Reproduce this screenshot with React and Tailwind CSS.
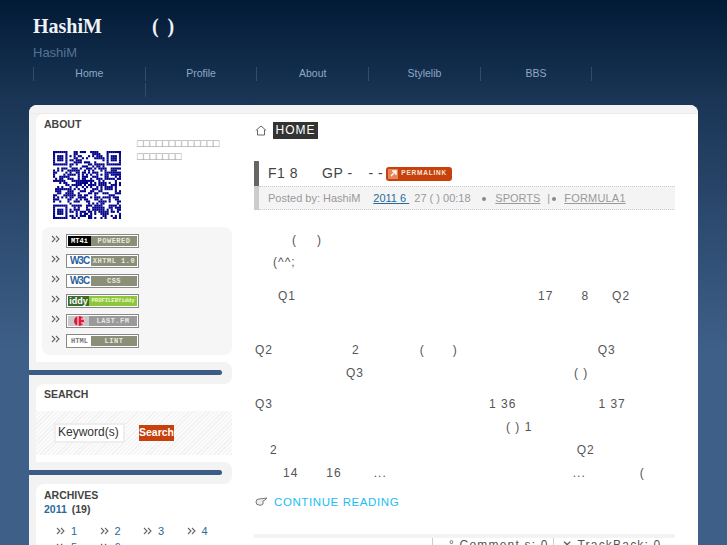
import React from "react";

function mulberry(a) {
  return () => {
    a |= 0; a = (a + 0x6d2b79f5) | 0;
    let t = Math.imul(a ^ (a >>> 15), 1 | a);
    t = (t + Math.imul(t ^ (t >>> 7), 61 | t)) ^ t;
    return ((t ^ (t >>> 14)) >>> 0) / 4294967296;
  };
}

function QR() {
  const n = 33;
  const r = mulberry(77);
  const rects = [];
  const inFinder = (x, y) => (x < 8 && y < 8) || (x >= n - 8 && y < 8) || (x < 8 && y >= n - 8);
  const finder = (fx, fy, x, y) => {
    const dx = x - fx, dy = y - fy;
    if (dx < 0 || dy < 0 || dx > 6 || dy > 6) return false;
    return dx === 0 || dy === 0 || dx === 6 || dy === 6 || (dx >= 2 && dx <= 4 && dy >= 2 && dy <= 4);
  };
  for (let y = 0; y < n; y++) {
    for (let x = 0; x < n; x++) {
      let on;
      if (inFinder(x, y)) on = finder(0, 0, x, y) || finder(n - 7, 0, x, y) || finder(0, n - 7, x, y);
      else on = r() > 0.47;
      if (on) rects.push(<rect key={x + "-" + y} x={x} y={y} width="1.02" height="1.02" />);
    }
  }
  return (
    <svg width="68" height="68" viewBox="0 0 33 33" fill="#000088" className="block">
      {rects}
    </svg>
  );
}

function Chevs({ className = "" }) {
  return (
    <svg width="9" height="8" viewBox="0 0 9 8" fill="none" stroke="#666" strokeWidth="1.1" className={className}>
      <path d="M1 1l3 3-3 3M5 1l3 3-3 3" />
    </svg>
  );
}

function Badge({ left, right, leftCls, rightCls, leftText = "text-white", w = "w-[23px]" }) {
  return (
    <div className="flex h-[14px] w-[73px] border border-[#888] bg-white p-px font-['Liberation_Mono',monospace] text-[7px] font-bold leading-[10px]">
      <div className={`${w} ${leftCls} ${leftText} flex items-center justify-center overflow-hidden whitespace-nowrap`}>{left}</div>
      <div className={`flex-1 ${rightCls} flex items-center justify-center whitespace-nowrap tracking-[0.5px] text-[#e8e8e0]`}>{right}</div>
    </div>
  );
}

function Row({ children }) {
  return (
    <div className="flex h-[20px] items-start gap-[6px]">
      <Chevs className="mt-[1px]" />
      {children}
    </div>
  );
}

function SideSep() {
  return (
    <div className="h-[22px] rounded-r-lg bg-[#f3f3f3] py-[8px]">
      <div className="h-[5px] w-[193px] rounded-r bg-[#3d5c85]" />
    </div>
  );
}

function Widget({ children, className = "" }) {
  return (
    <div className={`bg-[#f3f3f3] pl-[7px] ${className}`}>
      <div className="rounded-tl-lg bg-white">{children}</div>
    </div>
  );
}

const navItems = ["Home", "Profile", "About", "Stylelib", "BBS"];

export default function App() {
  return (
    <div className="h-[545px] w-[727px] overflow-hidden bg-[linear-gradient(#011a36_0,#1a3555_100px,#2c4a6f_220px,#3e5f88_350px)] font-['Liberation_Sans',sans-serif]">
      <header className="h-[105px] pl-[33px]">
        <div className="flex h-[38px] items-end font-['Liberation_Serif',serif] text-[20px] font-bold leading-[24px] text-[#eef1f5]">
          <span>HashiM</span>
          <span className="ml-[50px]">(</span>
          <span className="ml-[9px]">)</span>
        </div>
        <div className="mt-[7px] text-[13px] leading-[15px] text-[#557396]">HashiM</div>
        <nav className="mt-[7px] text-[10.5px] leading-[13px] text-[#8ea8c6]">
          <div className="flex">
            {navItems.map((t) => (
              <div key={t} className="h-[14px] w-[111.7px] border-l border-[#2f4c70] text-center">{t}</div>
            ))}
            <div className="h-[14px] border-l border-[#2f4c70]" />
          </div>
          <div className="ml-[111.7px] mt-[2px] h-[14px] border-l border-[#2f4c70]" />
        </nav>
      </header>

      <div className="ml-[29px] w-[669px] rounded-t-lg bg-white">
        <div className="h-[9px] rounded-t-lg border-b border-dotted border-[#e4e4e4] bg-[#f3f3f3]" />
        <div className="flex">
          <aside className="w-[203px] shrink-0">
            <Widget>
              <div className="h-[248px]">
                <h3 className="pl-[8px] pt-[3px] text-[10.5px] font-bold leading-[14px] text-[#444]">ABOUT</h3>
                <div className="flex h-[91px]">
                  <div className="ml-[17px] mt-[20px]"><QR /></div>
                  <p className="ml-[16px] mt-[6px] w-[86px] text-[10.5px] leading-[13px] text-[#999]">□□□□□□□□□□□□□ □□□□□□□</p>
                </div>
                <div className="ml-[6px] mt-[5px] h-[128px] rounded-lg bg-[#f6f6f6] pl-[9px] pt-[7px]">
                  <Row><Badge left="MT4i" right="POWERED" leftCls="bg-black" rightCls="bg-[#8b8f78]" /></Row>
                  <Row><Badge left={<span className="font-['Liberation_Sans',sans-serif] text-[10px] tracking-[-1px]">W3C</span>} right="XHTML 1.0" leftCls="bg-white" leftText="text-[#2a5f9e]" rightCls="bg-[#8b8f78]" /></Row>
                  <Row><Badge left={<span className="font-['Liberation_Sans',sans-serif] text-[10px] tracking-[-1px]">W3C</span>} right="CSS" leftCls="bg-white" leftText="text-[#2a5f9e]" rightCls="bg-[#8b8f78]" /></Row>
                  <Row><Badge left={<span className="font-['Liberation_Sans',sans-serif] text-[9px]">iddy</span>} right={<span className="text-[5.5px] tracking-[0px] text-[#f0f8d8]">PROFILEBYiddy</span>} w="w-[21px]" leftCls="bg-[#3c6b2c]" rightCls="bg-[#8cc63a]" /></Row>
                  <Row>
                    <Badge
                      left={
                        <svg width="18" height="10" viewBox="0 0 18 10">
                          <circle cx="9" cy="5" r="5" fill="#e0183c" />
                          <path d="M8 0v10" stroke="#fff" />
                          <path d="M11 3h3M11 7h3" stroke="#fff" />
                        </svg>
                      }
                      right="LAST.FM"
                      w="w-[21px]"
                      leftCls="bg-[#c9c9c9]"
                      rightCls="bg-[#9a9a9a]"
                    />
                  </Row>
                  <Row><Badge left="HTML" right="LINT" leftCls="bg-white" leftText="text-[#777]" rightCls="bg-[#8b8f78]" /></Row>
                </div>
              </div>
            </Widget>
            <SideSep />
            <Widget>
              <div className="h-[78px]">
                <h3 className="pl-[8px] pt-[3px] text-[10.5px] font-bold leading-[14px] text-[#444]">SEARCH</h3>
                <div className="mt-[10px] flex h-[44px] items-center bg-[repeating-linear-gradient(135deg,#f1f1f1_0,#f1f1f1_1px,#fbfbfb_1px,#fbfbfb_3px)] pl-[18px]">
                  <div className="h-[20px] w-[71px] border-2 border-[#eee] bg-white pl-[2px] text-[12px] leading-[15px] text-[#333]">Keyword(s)</div>
                  <div className="ml-[14px] h-[16px] w-[35px] bg-[#c8400b] text-center text-[10.5px] font-bold leading-[14px] text-white">Search</div>
                </div>
              </div>
            </Widget>
            <SideSep />
            <Widget>
              <div className="h-[70px] text-[#2a6a9a]">
                <h3 className="pl-[8px] pt-[4px] text-[10.5px] font-bold leading-[14px] text-[#444]">ARCHIVES</h3>
                <div className="pl-[8px] text-[10.5px] font-bold leading-[14px]">
                  2011 <span className="ml-[2px] text-[#444]">(19)</span>
                </div>
                <div className="ml-[20px] mt-[7px] grid w-[174px] grid-cols-4 text-[11px] leading-[16px]">
                  {["1", "2", "3", "4", "5", "6"].map((m) => (
                    <div key={m} className="flex items-center gap-[6px]">
                      <Chevs />
                      <span>{m}</span>
                    </div>
                  ))}
                </div>
              </div>
            </Widget>
          </aside>

          <main className="ml-[22px] w-[421px] shrink-0 text-[12px] tracking-[1px] text-[#555]">
            <div className="mt-[7px] flex h-[18px] items-center">
              <svg width="12" height="11" viewBox="0 0 12 11" fill="none" stroke="#666" strokeWidth="1" className="ml-[1px]">
                <path d="M.8 5.5L6 1l5.2 4.5M2.5 5v5h7V5" />
              </svg>
              <span className="ml-[6px] h-[17px] w-[45px] bg-[#333] text-center text-[12px] leading-[17px] tracking-[1px] text-white">HOME</span>
            </div>

            <div className="mt-[22px] flex h-[25px] items-center border-l-[5px] border-[#666] pl-[9px] text-[14px] tracking-[0.5px] text-[#444]">
              <span>F1 8</span>
              <span className="ml-[24px]">GP -</span>
              <span className="ml-[16px]">- -</span>
              <span className="ml-[3px] flex h-[14px] w-[66px] items-center rounded-[3px] bg-[#c8400b] pl-[2px] text-[6.5px] font-bold leading-none tracking-[0.8px] text-[#f6e6dc]">
                <span className="mr-[3px] flex h-[10px] w-[10px] items-center justify-center bg-[#e8845a]">
                  <svg width="7" height="7" viewBox="0 0 7 7" fill="none" stroke="#fff" strokeWidth="1.4"><path d="M1 6l5-5M2 1h4v4" /></svg>
                </span>
                PERMALINK
              </span>
            </div>
            <div className="border-l-[5px] border-[#ccc]">
              <div className="flex h-[24px] items-center border-y border-dotted border-[#ccc] bg-[#f4f4f4] pl-[9px] pt-px text-[11px] tracking-[0px] text-[#999]">
                <span>Posted by: HashiM</span>
                <span className="ml-[13px] w-[41px] whitespace-pre text-[#2a6a9a] underline">2011 6 </span>
                <span className="w-[55px] whitespace-pre">27 ( ) 00:18</span>
                <span className="ml-[13px] h-[4px] w-[4px] rounded-full bg-[#888]" />
                <span className="ml-[9px] underline">SPORTS</span>
                <span className="ml-[7px]">|</span>
                <span className="ml-[2px] h-[4px] w-[4px] rounded-full bg-[#888]" />
                <span className="ml-[8px] tracking-[0.2px] underline">FORMULA1</span>
              </div>
            </div>

            <div className="mt-[23px] leading-[14px]">
              <div className="h-[14px]"><span className="ml-[38px]">(</span><span className="ml-[20px]">)</span></div>
              <div className="mt-[8px] h-[14px]"><span className="ml-[19px]">(^^;</span></div>
              <div className="mt-[20px] h-[14px]"><span className="ml-[24px]">Q1</span><span className="ml-[242px]">17</span><span className="ml-[28px]">8</span><span className="ml-[23px]">Q2</span></div>
              <div className="mt-[40px] h-[14px]"><span className="ml-[1px]">Q2</span><span className="ml-[79px]">2</span><span className="ml-[60px]">(</span><span className="ml-[28px]">)</span><span className="ml-[140px]">Q3</span></div>
              <div className="mt-[9px] h-[14px]"><span className="ml-[92px]">Q3</span><span className="ml-[210px]">( )</span></div>
              <div className="mt-[17px] h-[14px]"><span className="ml-[1px]">Q3</span><span className="ml-[216px]">1 36</span><span className="ml-[82px]">1 37</span></div>
              <div className="mt-[9px] h-[14px]"><span className="ml-[252px]">( ) 1</span></div>
              <div className="mt-[9px] h-[14px]"><span className="ml-[16px]">2</span><span className="ml-[299px]">Q2</span></div>
              <div className="mt-[9px] h-[14px]"><span className="ml-[29px]">14</span><span className="ml-[28px]">16</span><span className="ml-[32px]">...</span><span className="ml-[186px]">...</span><span className="ml-[54px]">(</span></div>
            </div>

            <div className="mt-[15px] flex h-[14px] items-center">
              <svg width="13" height="10" viewBox="0 0 13 10" fill="#eee" stroke="#777" strokeWidth="1" className="ml-[1px]">
                <path d="M1 5Q1 2 4 2L12 1 10 3 8 4 8 7Q6 9 4 8 1 8 1 5z" />
              </svg>
              <span className="ml-[6px] text-[11.5px] leading-[14px] tracking-[0.6px] text-[#22bdf5]">CONTINUE READING</span>
            </div>

            <div className="mt-[25px] h-[4px] bg-[#f3f3f3]" />
            <div className="flex h-[14px] text-[12px] leading-[14px] tracking-[1.2px] text-[#555]">
              <div className="ml-[178px] w-[121px] whitespace-nowrap border-l border-[#ccc] pl-[16px]">° Comment s: 0</div>
              <div className="w-[122px] whitespace-nowrap border-l border-[#ccc] pl-[8px]">✕ TrackBack: 0</div>
            </div>
          </main>
        </div>
      </div>
    </div>
  );
}
